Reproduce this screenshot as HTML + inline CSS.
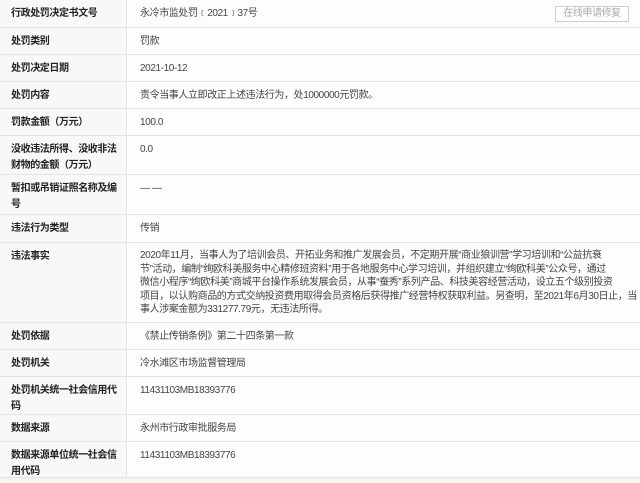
<!DOCTYPE html>
<html><head><meta charset="utf-8"><style>
body{margin:0;width:640px;height:483px;background:#f4f4f2;font-family:"Liberation Sans","Noto Sans CJK SC",sans-serif;font-size:10px;letter-spacing:-0.4px;color:#333;overflow:hidden;position:relative}
.row{position:absolute;left:0;width:640px;border-bottom:1px solid #e4e4e2;box-sizing:border-box;background:#fdfdfc}
.l{position:absolute;left:0;top:0;bottom:0;width:127px;background:#f8f8f7;border-right:1px solid #e4e4e2;font-weight:bold;color:#222;padding:6px 4px 0 11px;box-sizing:border-box;line-height:16px}
.r{position:absolute;left:140px;top:6px;right:8px;line-height:16px;color:#444;white-space:nowrap}
.btn{position:absolute;left:555px;top:6px;width:72px;height:14px;border:1px solid #ccc;color:#aaa;font-size:10px;line-height:14px;text-align:center;background:#fff}
</style></head><body>
<div class="row" style="top:0;height:28px"><div class="l">行政处罚决定书文号</div><div class="r">永冷市监处罚﹝2021﹞37号</div></div>
<div class="row" style="top:28px;height:27px"><div class="l">处罚类别</div><div class="r">罚款</div></div>
<div class="row" style="top:55px;height:27px"><div class="l">处罚决定日期</div><div class="r">2021-10-12</div></div>
<div class="row" style="top:82px;height:27px"><div class="l">处罚内容</div><div class="r">责令当事人立即改正上述违法行为，处1000000元罚款。</div></div>
<div class="row" style="top:109px;height:27px"><div class="l">罚款金额（万元）</div><div class="r">100.0</div></div>
<div class="row" style="top:136px;height:39px"><div class="l">没收违法所得、没收非法<br>财物的金额（万元）</div><div class="r">0.0</div></div>
<div class="row" style="top:175px;height:40px"><div class="l">暂扣或吊销证照名称及编<br>号</div><div class="r">— —</div></div>
<div class="row" style="top:215px;height:28px"><div class="l">违法行为类型</div><div class="r">传销</div></div>
<div class="row" style="top:243px;height:80px"><div class="l">违法事实</div><div class="r" style="line-height:13.6px;top:6px">2020年11月，当事人为了培训会员、开拓业务和推广发展会员，不定期开展“商业狼训营”学习培训和“公益抗衰<br>节”活动，编制“绚欧科美服务中心精修班资料”用于各地服务中心学习培训，并组织建立“绚欧科美”公众号，通过<br>微信小程序“绚欧科美”商城平台操作系统发展会员，从事“蚕秀”系列产品、科技美容经营活动，设立五个级别投资<br>项目，以认购商品的方式交纳投资费用取得会员资格后获得推广经营特权获取利益。另查明，至2021年6月30日止，当<br>事人涉案金额为331277.79元，无违法所得。</div></div>
<div class="row" style="top:323px;height:27px"><div class="l">处罚依据</div><div class="r">《禁止传销条例》第二十四条第一款</div></div>
<div class="row" style="top:350px;height:27px"><div class="l">处罚机关</div><div class="r">冷水滩区市场监督管理局</div></div>
<div class="row" style="top:377px;height:38px"><div class="l">处罚机关统一社会信用代<br>码</div><div class="r">11431103MB18393776</div></div>
<div class="row" style="top:415px;height:27px"><div class="l">数据来源</div><div class="r">永州市行政审批服务局</div></div>
<div class="row" style="top:442px;height:36px"><div class="l">数据来源单位统一社会信<br>用代码</div><div class="r">11431103MB18393776</div></div>
<div class="btn">在线申请修复</div>
</body></html>
